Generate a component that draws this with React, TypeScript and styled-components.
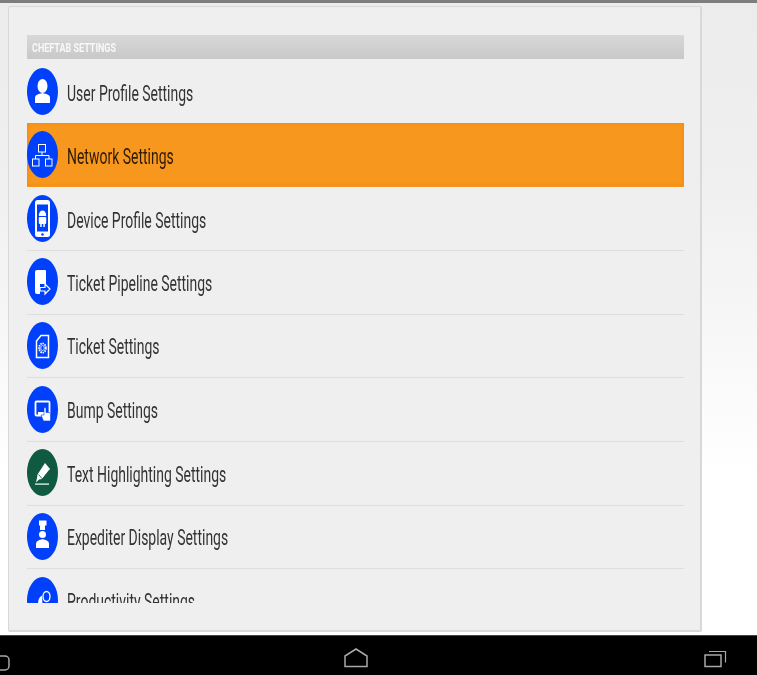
import React from "react";
import styled, { createGlobalStyle } from "styled-components";

const Global = createGlobalStyle`
  html, body { margin: 0; padding: 0; background: #fff; }
  body { font-family: Roboto, "Liberation Sans", sans-serif; }
`;

const Page = styled.div`
  width: 757px;
  height: 675px;
  display: flex;
  flex-direction: column;
  overflow: hidden;
`;
const TopBar = styled.div`
  height: 3px;
  flex: none;
  background: #7d7d7d;
`;
const Main = styled.main`
  flex: 1;
  min-height: 0;
  padding: 3px 55px 3px 8px;
  background: linear-gradient(180deg, #ececec 0%, #f0f0f0 30%, #ffffff 75%, #ffffff 100%);
`;
const Panel = styled.section`
  height: 100%;
  box-sizing: border-box;
  padding: 28px 16px 0 18px;
  background: #efefef;
  border: 1px solid #d8d8d8;
  border-width: 1px 2px 2px 1px;
  border-radius: 2px;
`;
const Header = styled.h2`
  margin: 0;
  height: 24px;
  display: flex;
  align-items: center;
  padding: 2px 0 0 5px;
  box-sizing: border-box;
  background: linear-gradient(180deg, #d8d8d8, #c8c8c8);
  color: #f8f8f8;
  font-size: 12px;
  font-weight: 700;
  span {
    display: inline-block;
    transform: scale(0.75, 1.1);
    transform-origin: left center;
    white-space: nowrap;
    filter: blur(0.4px);
  }
`;
const List = styled.ul`
  margin: 0;
  padding: 0;
  list-style: none;
  height: 544px;
  overflow: hidden;
`;
const Row = styled.li<{ $active?: boolean; $plain?: boolean }>`
  height: 63.67px;
  box-sizing: border-box;
  padding-bottom: 1px;
  display: flex;
  align-items: center;
  gap: 9px;
  color: ${(p) => (p.$active ? "#2b1a05" : "#333")};
  background: ${(p) => (p.$active ? "#f8971d" : "transparent")};
  box-shadow: ${(p) => (p.$active ? "inset 0 0 4px #ef8410" : "none")};
  border-bottom: 1px solid ${(p) => (p.$plain ? "transparent" : "#dedede")};

  &:nth-child(-n + 3) {
    height: 64px;
    padding-bottom: 0;
  }
  &:first-child {
    padding-top: 2px;
  }
`;
const Label = styled.span`
  font-size: 22px;
  line-height: 1;
  margin-top: 4px;
  white-space: nowrap;
  display: inline-block;
  transform: scale(0.635, 1);
  transform-origin: left center;
  filter: blur(0.3px);
`;
const Badge = styled.svg`
  width: 31px;
  height: 47px;
  flex: none;
  display: block;
`;
const NavBar = styled.nav`
  height: 40px;
  flex: none;
  background: #000;
  border-top: 1px solid #444;
  box-sizing: border-box;
  display: grid;
  grid-template-columns: 344px 360px 1fr;
  align-items: center;
`;
const NavIcon = styled.svg<{ $drop?: number }>`
  display: block;
  margin-top: ${(p) => p.$drop ?? 4}px;
`;

const B = "#0040fb";
const W = "#fff";

const icons: Record<string, React.ReactNode> = {
  user: (
    <>
      <ellipse cx="15.5" cy="18" rx="5" ry="7" fill={W} />
      <path d="M8 35v-5c0-3 3-4 7.500-5 4.500 1 7.500 2 7.500 5v5z" fill={W} />
    </>
  ),
  net: (
    <g fill="none" stroke={W} strokeWidth="1">
      <rect x="11.500" y="13.500" width="7" height="7.500" />
      <rect x="5.500" y="28" width="6.500" height="7" />
      <rect x="18.500" y="28" width="6.500" height="7" />
      <path d="M15 21v3.500M8.500 28v-3.500h13.500V28" />
    </g>
  ),
  device: (
    <>
      <rect x="8" y="5" width="15" height="37" rx="2.500" fill={W} />
      <rect x="10" y="9.500" width="11" height="27" fill={B} />
      <circle cx="15.500" cy="39.500" r="1.300" fill={B} />
      <path d="M11.800 21c0-3.500 1.500-5.500 3.700-5.500s3.700 2 3.700 5.500z" fill={W} />
      <rect x="11.800" y="22" width="7.400" height="7" rx="1" fill={W} />
      <rect x="13.200" y="29" width="1.500" height="3" fill={W} />
      <rect x="16.300" y="29" width="1.500" height="3" fill={W} />
    </>
  ),
  pipeline: (
    <>
      <path d="M10 12h8a1 1 0 0 1 1 1v13h-6v10H10a2 2 0 0 1-2-2V14a2 2 0 0 1 2-2z" fill={W} />
      <path d="M13 29.500h5V26l5 5-5 5v-3h-5z" fill="none" stroke={W} strokeWidth="1.200" />
    </>
  ),
  ticket: (
    <>
      <path d="M14 13.500h7.500v22h-12V19z" fill="none" stroke={W} strokeWidth="1.500" />
      <ellipse cx="15.500" cy="26" rx="3.400" ry="4.600" fill="none" stroke={W} strokeWidth="1.800" strokeDasharray="1.500 0.800" />
      <ellipse cx="15.500" cy="26" rx="1.800" ry="2.500" fill="none" stroke={W} strokeWidth="0.800" />
    </>
  ),
  bump: (
    <>
      <rect x="8.500" y="15.500" width="14" height="14" rx="1" fill="none" stroke={W} strokeWidth="1.800" />
      <path d="M11 26h7v3h-7z" fill={W} />
      <path d="M17 22.500a1 1 0 0 1 2 0v4h3a1.500 1.500 0 0 1 1.500 1.500v7h-7l-2.500-6h3z" fill={W} stroke={B} strokeWidth="0.600" />
    </>
  ),
  marker: (
    <>
      <path d="M18 14l5 6-8 10-3 .5-3 3 1-4.500 .5-3.500z" fill={W} />
      <path d="M11.500 25.500l4 4.500 7-9" fill="none" stroke="#0f5a41" strokeWidth="0.800" />
      <rect x="8" y="34.500" width="14" height="1.200" fill={W} />
    </>
  ),
  chef: (
    <>
      <path d="M12 7.500h7.500v5h-1.500v4.500h-5v-4.500h-1z" fill={W} />
      <ellipse cx="15.500" cy="21.500" rx="3.500" ry="3.500" fill={W} />
      <path d="M9 35v-4c0-3 3-4 6.500-5 3.500 1 6.500 2 6.500 5v4z" fill={W} />
    </>
  ),
  productivity: (
    <>
      <path d="M15 18.500a6 9 0 0 0-4 8.500v10h5z" fill={W} />
      <ellipse cx="19.500" cy="19.500" rx="3.500" ry="5" fill="none" stroke={W} strokeWidth="1.300" />
    </>
  ),
};

const rows = [
  { label: "User Profile Settings", icon: "user", plain: true },
  { label: "Network Settings", icon: "net", active: true, plain: true },
  { label: "Device Profile Settings", icon: "device" },
  { label: "Ticket Pipeline Settings", icon: "pipeline" },
  { label: "Ticket Settings", icon: "ticket" },
  { label: "Bump Settings", icon: "bump" },
  { label: "Text Highlighting Settings", icon: "marker", fill: "#0f5a41" },
  { label: "Expediter Display Settings", icon: "chef" },
  { label: "Productivity Settings", icon: "productivity" },
];

export default function App() {
  return (
    <Page>
      <Global />
      <TopBar />
      <Main>
        <Panel>
          <Header>
            <span>CHEFTAB SETTINGS</span>
          </Header>
          <List>
            {rows.map((r) => (
              <Row key={r.label} $active={r.active} $plain={r.plain}>
                <Badge viewBox="0 0 31 47" preserveAspectRatio="none">
                  <ellipse cx="15.500" cy="23.500" rx="15.500" ry="23.500" fill={r.fill ?? B} />
                  {icons[r.icon]}
                </Badge>
                <Label>{r.label}</Label>
              </Row>
            ))}
          </List>
        </Panel>
      </Main>
      <NavBar>
        <NavIcon $drop={14} width="11" height="20" viewBox="0 0 11 20">
          <path d="M0 3h5a4 4 0 0 1 4 4v6a4 4 0 0 1-4 4H0" fill="none" stroke="#a8a8a8" strokeWidth="1.500" />
        </NavIcon>
        <NavIcon width="24" height="20" viewBox="0 0 24 20">
          <path d="M1 8L12 1l11 7v10.500H1z" fill="none" stroke="#a8a8a8" strokeWidth="1.500" />
        </NavIcon>
        <NavIcon width="23" height="20" viewBox="0 0 23 20">
          <rect x="1" y="7" width="16" height="11.500" fill="none" stroke="#a8a8a8" strokeWidth="1.500" />
          <path d="M5 3.500h16.500v11" fill="none" stroke="#a8a8a8" strokeWidth="1.200" />
        </NavIcon>
      </NavBar>
    </Page>
  );
}
